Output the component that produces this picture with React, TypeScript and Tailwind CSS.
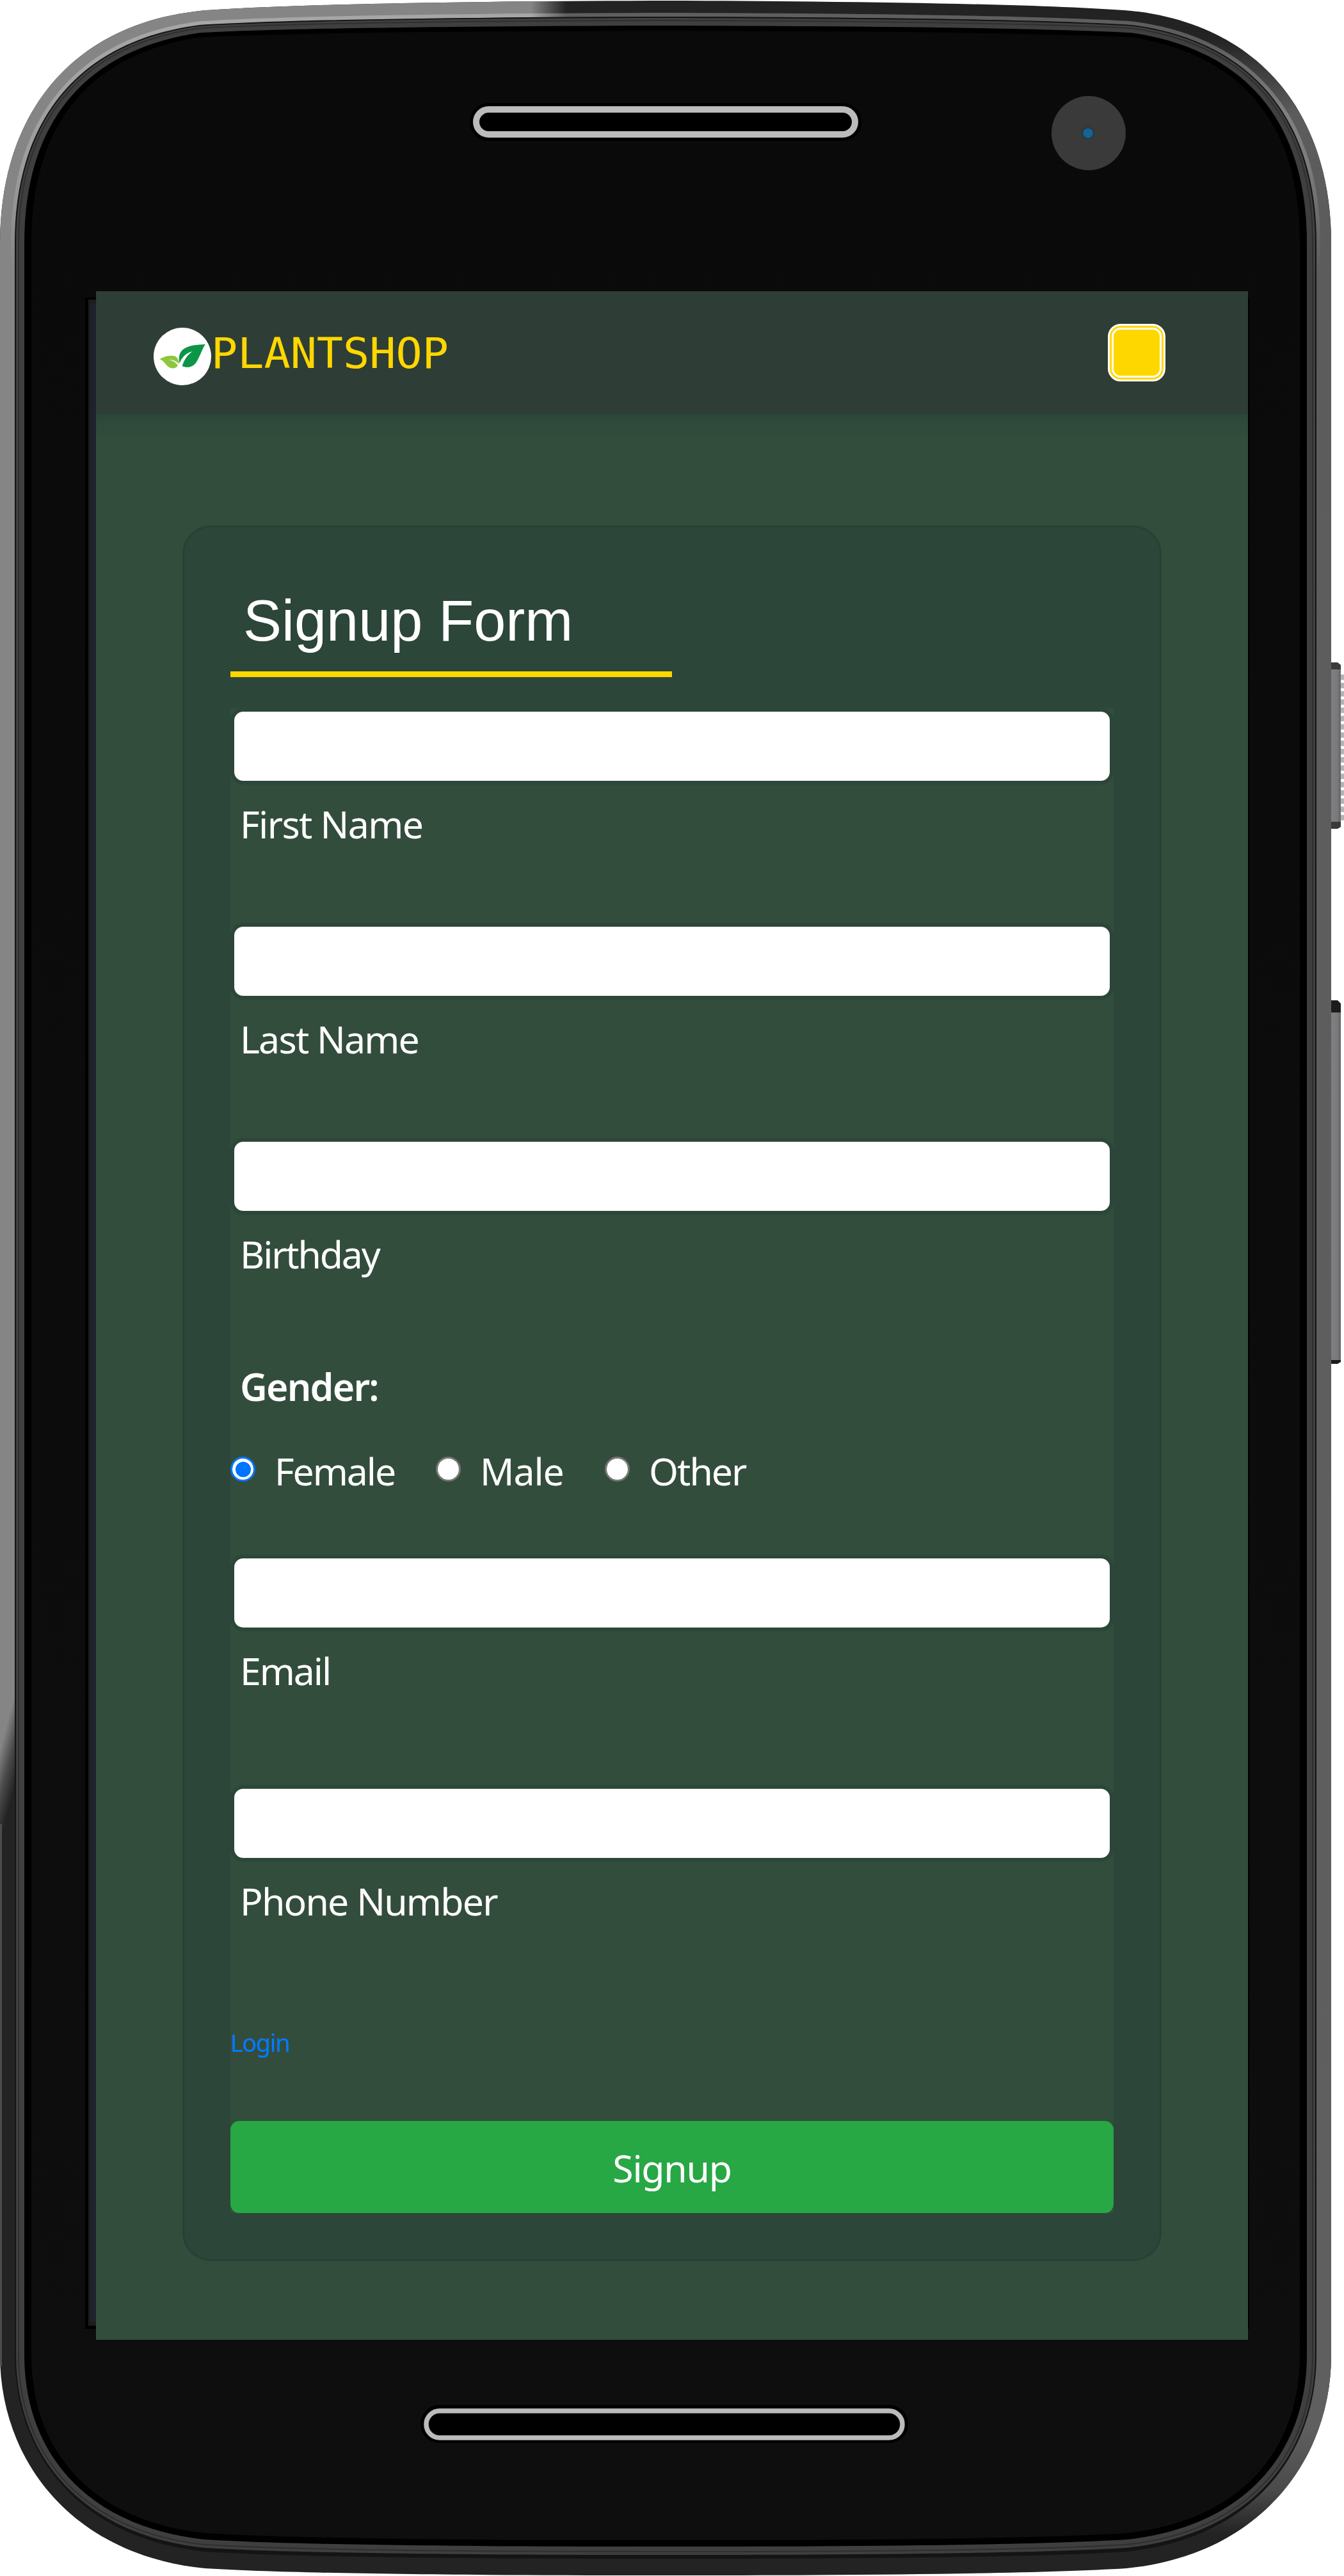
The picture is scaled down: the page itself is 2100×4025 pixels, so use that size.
import type { ReactNode } from "react";

/** Outline of the handset, inset from its outer edge by the given side, top and bottom distances. */
function outline(side: number, top: number, bottom: number) {
  const x = (v: number) => 2080 - v;
  const k = side * 0.45;
  const t = top;
  const b = 4024 - bottom;
  return [
    `M${side},380`,
    `C${side},${180 + k} ${110 + k},${38 + t} 312,${16 + t * 0.88}`,
    `C450,${6 + t * 0.95} 700,${1 + t} 1040,${t}`,
    `C${x(700)},${1 + t} ${x(450)},${6 + t * 0.95} ${x(312)},${16 + t * 0.88}`,
    `C${x(110 + k)},${38 + t} ${x(side)},${180 + k} ${x(side)},380`,
    `L${x(side)},3680`,
    `C${x(side)},${3842 - k} ${x(110 + k)},${b - 32} ${x(320)},${b - 11}`,
    `C${x(450)},${b - 3} ${x(700)},${b} 1040,${b}`,
    `C700,${b} 450,${b - 3} 320,${b - 11}`,
    `C${110 + k},${b - 32} ${side},${3842 - k} ${side},3680`,
    "Z",
  ].join(" ");
}

function PhoneBody() {
  const notches = Array.from({ length: 18 }, (_, i) => 1054 + i * 12.9);
  return (
    <svg className="absolute inset-0" width="2100" height="4025" viewBox="0 0 2100 4025" aria-hidden="true">
      <defs>
        <clipPath id="body">
          <path d={outline(0, 1, 0)} />
        </clipPath>
        <linearGradient id="topFade" x1="0" x2="1" y1="0" y2="0">
          <stop offset="0" stopColor="#868686" />
          <stop offset="1" stopColor="#868686" stopOpacity="0" />
        </linearGradient>
        <linearGradient id="leftFade" x1="0" y1="2735" x2="35" y2="2744" gradientUnits="userSpaceOnUse">
          <stop offset="0" stopColor="#858585" />
          <stop offset="0.5" stopColor="#4a4a4a" />
          <stop offset="1" stopColor="#232323" />
        </linearGradient>
        <linearGradient id="rightSide" x1="0" x2="0" y1="60" y2="3990" gradientUnits="userSpaceOnUse">
          <stop offset="0" stopColor="#232323" />
          <stop offset="0.012" stopColor="#3c3c3c" />
          <stop offset="0.03" stopColor="#5c5c5c" />
          <stop offset="0.95" stopColor="#5f5f60" />
          <stop offset="0.975" stopColor="#4a4a4a" />
          <stop offset="0.992" stopColor="#232323" />
        </linearGradient>
        <linearGradient id="shine" x1="0" x2="0" y1="0" y2="420" gradientUnits="userSpaceOnUse">
          <stop offset="0" stopColor="#ffffff" stopOpacity="0.28" />
          <stop offset="0.6" stopColor="#ffffff" stopOpacity="0.2" />
          <stop offset="1" stopColor="#ffffff" stopOpacity="0" />
        </linearGradient>
        <linearGradient id="face" x1="0" x2="0" y1="0" y2="1">
          <stop offset="0" stopColor="#0a0a0a" />
          <stop offset="1" stopColor="#0e0e0e" />
        </linearGradient>
        <linearGradient id="key" x1="0" x2="1" y1="0" y2="0">
          <stop offset="0" stopColor="#808082" />
          <stop offset="0.65" stopColor="#7b7b7d" />
          <stop offset="1" stopColor="#656567" />
        </linearGradient>
      </defs>

      {/* side keys */}
      <path d="M2078 1035h12l5 4v253l-5 3h-12z" fill="#3a3a3a" />
      <rect x="2078" y="1046" width="17" height="238" fill="url(#key)" />
      {notches.map((y) => (
        <rect key={y} x="2095" y={y} width="5" height="8.5" fill="#b4b4b6" />
      ))}
      <path d="M2078 1563h12l5 5v560l-5 3h-12z" fill="#1c1c1c" />
      <rect x="2078" y="1582" width="17" height="543" fill="url(#key)" />

      <g clipPath="url(#body)">
        <rect width="2084" height="4025" fill="#232323" />
        <rect x="0" y="0" width="830" height="2630" fill="#858585" />
        <rect x="829" y="0" width="56" height="30" fill="url(#topFade)" />
        <rect x="0" y="2629" width="24" height="261" fill="url(#leftFade)" />
        <rect x="0" y="2850" width="3" height="848" fill="#4c4c4c" />
        <rect x="1850" y="60" width="232" height="3930" fill="url(#rightSide)" />
      </g>
      <path d={outline(20, 23, 23)} fill="none" stroke="url(#shine)" strokeWidth="6" />
      <path d={outline(23, 26, 26)} fill="#141414" />
      <path d={outline(25, 28, 32)} fill="#3f3f3f" />
      <path d={outline(29, 32, 37)} fill="none" stroke="#2f2f2f" strokeWidth="2" />
      <path d={outline(38, 40, 45)} fill="#000" />
      <path d={outline(49, 48, 55)} fill="url(#face)" />

      {/* display edge */}
      <rect x="133" y="465" width="18" height="3174" fill="#000" />
      <rect x="138" y="468" width="13" height="3166" fill="#1c1c1c" />
      <rect x="141" y="474" width="10" height="3154" fill="#1f222a" />
      <rect x="1950" y="465" width="2" height="3174" fill="#000" />

      {/* earpiece, camera and lower speaker */}
      <rect x="734" y="161" width="612" height="59" rx="29" fill="#000" />
      <rect x="744" y="171" width="592" height="39" rx="19.5" fill="#000" stroke="#bbb" strokeWidth="10" />
      <circle cx="1701" cy="208" r="58" fill="#3a3a3a" />
      <circle cx="1700" cy="208" r="11" fill="#2b3b44" />
      <circle cx="1700" cy="208" r="7.5" fill="#176494" />
      <rect x="657" y="3758" width="762" height="59" rx="29" fill="#000" />
      <rect x="666" y="3767" width="744" height="42" rx="21" fill="#000" stroke="#bbb" strokeWidth="7.5" />
    </svg>
  );
}

function LeafLogo() {
  return (
    <svg className="size-[90px] shrink-0 rounded-full bg-white" viewBox="60 66 270 270" aria-hidden="true">
      <path
        fill="#0c9447"
        d="M182 233C176 205 180 183 198 168C225 147 268 146 303 144C290 160 280 195 262 225C248 250 220 258 194 246C200 225 215 195 242 178C215 182 191 206 182 233Z"
      />
      <path
        fill="#8dc63f"
        d="M88 213C110 200 150 190 168 205C178 215 180 225 178 236C165 222 150 215 131 216C150 219 165 230 174 242C165 260 145 260 130 250C115 240 110 222 88 213Z"
      />
    </svg>
  );
}

function Field({ label, className, tracking }: { label: string; className: string; tracking: string }) {
  return (
    <div className={className}>
      <input
        aria-label={label}
        className="block h-[120px] w-full rounded-[20px] border-[6px] border-[#2c4639] bg-white px-6 text-[48px] text-black outline-none"
      />
      <label className={`mt-4 ml-[15px] block text-[59px] leading-[90px] ${tracking}`}>{label}</label>
    </div>
  );
}

function Option({ children, checked, className }: { children: ReactNode; checked?: boolean; className: string }) {
  return (
    <label className={`flex items-start gap-[30px] ${className}`}>
      <span
        className={`mt-[23px] flex size-[39px] shrink-0 items-center justify-center rounded-full border-[3px] bg-white ${
          checked ? "border-[#0075ff]" : "border-[#767676]"
        }`}
      >
        {checked && <span className="size-[24px] rounded-full bg-[#0075ff]" />}
      </span>
      <span>{children}</span>
    </label>
  );
}

export default function App() {
  return (
    <div className="relative h-[4025px] w-[2100px] overflow-hidden bg-white pt-[455px] pl-[150px] font-['Noto_Sans',sans-serif] text-white">
      <PhoneBody />
      <div className="relative flex h-[3201px] w-[1800px] flex-col bg-[#334d3c]">
        <header className="flex h-[192px] shrink-0 items-start justify-between bg-[#2e3d36] pr-[129px] pl-[90px]">
          <div className="flex pt-[57px]">
            <LeafLogo />
            <span className="origin-left scale-x-[1.045] font-['DejaVu_Sans_Mono',monospace] text-[65.5px] leading-[80px] text-[#ffd700]">
              PLANTSHOP
            </span>
          </div>
          <button
            aria-label="Menu"
            className="mt-[51px] size-[90px] rounded-[20px] border-[9px] border-double border-white bg-[#ffd700]"
          />
        </header>
        <div className="h-[40px] shrink-0 bg-linear-to-b from-[#2c4639] to-[#334d3c]" />

        <main className="mt-[134px] ml-[135px] h-[2712px] w-[1530px] rounded-[45px] border-[3px] border-[#294035] bg-[#2c4639] px-[72px] pt-[92px]">
          <h1 className="w-[690px] border-b-[9px] border-[#ffd700] pb-[25px] pl-5 font-['Liberation_Sans',sans-serif] text-[90px] leading-[108px]">
            Signup Form
          </h1>
          <form className="mt-[48px] flex h-[2352px] flex-col bg-[#334d3c]">
            <Field label="First Name" className="h-[336px]" tracking="tracking-[-1.6px]" />
            <Field label="Last Name" className="h-[336px]" tracking="tracking-[-1.8px]" />
            <Field label="Birthday" className="h-[336px]" tracking="tracking-[-2.2px]" />
            <p className="mt-[7px] ml-[15px] text-[59px] leading-[90px] font-semibold tracking-[-1.8px]">Gender:</p>
            <div className="mt-[42px] flex text-[59px] leading-[90px]">
              <Option checked className="w-[321px] tracking-[-2.1px]">
                Female
              </Option>
              <Option className="w-[264px] tracking-[-1.1px]">Male</Option>
              <Option className="tracking-[-2px]">Other</Option>
            </div>
            <Field label="Email" className="mt-[86px] h-[360px]" tracking="tracking-[-2.1px]" />
            <Field label="Phone Number" className="h-[373px]" tracking="tracking-[-1.8px]" />
            <a className="text-[38px] leading-[58px] tracking-[-1.4px] text-[#007bff]">Login</a>
            <button
              type="button"
              className="mt-[94px] h-[144px] rounded-[14px] bg-[#28a745] pt-[2px] text-[59px] leading-[142px] tracking-[-1.3px]"
            >
              Signup
            </button>
          </form>
        </main>
      </div>
    </div>
  );
}
